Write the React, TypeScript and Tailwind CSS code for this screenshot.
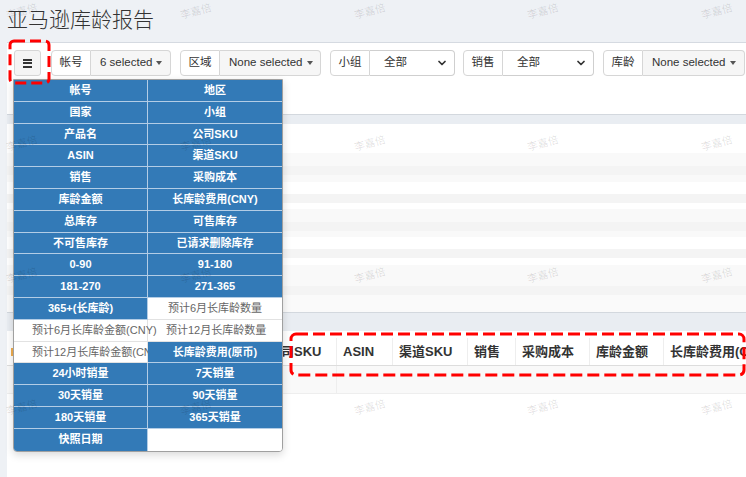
import { ChevronDown } from "lucide-react";

type Col = { label: string; on: boolean };

const columns: Col[] = [
    { label: "帐号", on: true },
    { label: "地区", on: true },
    { label: "国家", on: true },
    { label: "小组", on: true },
    { label: "产品名", on: true },
    { label: "公司SKU", on: true },
    { label: "ASIN", on: true },
    { label: "渠道SKU", on: true },
    { label: "销售", on: true },
    { label: "采购成本", on: true },
    { label: "库龄金额", on: true },
    { label: "长库龄费用(CNY)", on: true },
    { label: "总库存", on: true },
    { label: "可售库存", on: true },
    { label: "不可售库存", on: true },
    { label: "已请求删除库存", on: true },
    { label: "0-90", on: true },
    { label: "91-180", on: true },
    { label: "181-270", on: true },
    { label: "271-365", on: true },
    { label: "365+(长库龄)", on: true },
    { label: "预计6月长库龄数量", on: false },
    { label: "预计6月长库龄金额(CNY)", on: false },
    { label: "预计12月长库龄数量", on: false },
    { label: "预计12月长库龄金额(CNY)", on: false },
    { label: "长库龄费用(原币)", on: true },
    { label: "24小时销量", on: true },
    { label: "7天销量", on: true },
    { label: "30天销量", on: true },
    { label: "90天销量", on: true },
    { label: "180天销量", on: true },
    { label: "365天销量", on: true },
    { label: "快照日期", on: true },
];

// faint striped rows of the first (empty) table
const stripes = [
    { h: 29, c: "bg-white" },
    { h: 13, c: "bg-[#f9f9f9]" },
    { h: 9, c: "bg-[#f4f4f4]" },
    { h: 7, c: "bg-[#f9f9f9]" },
    { h: 12, c: "bg-white" },
    { h: 9, c: "bg-[#f4f4f4]" },
    { h: 6, c: "bg-white" },
    { h: 13, c: "bg-[#f9f9f9]" },
    { h: 9, c: "bg-[#f4f4f4]" },
    { h: 6, c: "bg-[#f9f9f9]" },
    { h: 12, c: "bg-white" },
    { h: 9, c: "bg-[#f4f4f4]" },
    { h: 7, c: "bg-white" },
    { h: 21, c: "bg-[#f9f9f9]" },
    { h: 9, c: "bg-[#f4f4f4]" },
    { h: 17, c: "bg-[#fafafa]" },
];

// header cells; the first ones sit under the column menu
const headCols = [
    { t: "", w: 60 },
    { t: "", w: 50 },
    { t: "", w: 50 },
    { t: "", w: 50 },
    { t: "", w: 45 },
    { t: "公司SKU", w: 75 },
    { t: "ASIN", w: 56 },
    { t: "渠道SKU", w: 75 },
    { t: "销售", w: 48 },
    { t: "采购成本", w: 74 },
    { t: "库龄金额", w: 74 },
    { t: "长库龄费用(CNY)", w: 120 },
];

const markX = [6, 180, 354, 527, 701];
const markY = [3, 135, 267, 399];

function Caret() {
    return (
        <span className="ml-[4px] inline-block w-0 h-0 border-l-[3.5px] border-r-[3.5px] border-t-[4px] border-l-transparent border-r-transparent border-t-[#555] align-middle" />
    );
}

function Label({ text }: { text: string }) {
    return (
        <div className="w-[40px] h-full flex items-center justify-center bg-white border border-[#d6d6d6] rounded-l-[4px] text-[#333]">
            {text}
        </div>
    );
}

function MultiButton({ text, w }: { text: string; w: string }) {
    return (
        <div
            className={`${w} h-full flex items-center pl-[9px] bg-[#f6f6f6] border border-l-0 border-[#d6d6d6] rounded-r-[4px] text-[#333] whitespace-nowrap`}
        >
            {text}
            <Caret />
        </div>
    );
}

function FakeSelect({ w }: { w: string }) {
    return (
        <div
            className={`${w} h-full flex items-center justify-between pl-[14px] pr-[6px] bg-white border border-l-0 border-[#cfcfcf] rounded-r-[4px] text-[#333]`}
        >
            <span>全部</span>
            <ChevronDown size={12} strokeWidth={3.5} className="text-[#333]" />
        </div>
    );
}

export default function App() {
    return (
        <div className="relative w-[746px] h-[477px] overflow-hidden bg-[#eef1f5] flex flex-col font-['Liberation_Sans','Noto_Sans_CJK_SC',sans-serif] text-[11.5px]">
            <div className="h-[42px] shrink-0 px-[7px] pt-[4px]">
                <h1 className="text-[21px] leading-[28px] text-[#333] font-['Noto_Sans_CJK_SC',sans-serif] font-light">
                    亚马逊库龄报告
                </h1>
            </div>

            <div className="flex-1 ml-[7px] bg-white border-t border-[#d5dae1] flex flex-col">
                {/* toolbar */}
                <div className="h-[71px] shrink-0 pt-[7px] pl-[7px]">
                    <div className="h-[26px] flex items-stretch">
                        <div className="w-[27px] h-full flex flex-col items-center justify-center gap-[1.5px] bg-[#f4f4f4] border border-[#d6d6d6] rounded-[3px]">
                            <span className="block w-[9px] h-[2px] bg-[#333]" />
                            <span className="block w-[9px] h-[2px] bg-[#333]" />
                            <span className="block w-[9px] h-[2px] bg-[#333]" />
                        </div>
                        <div className="ml-[10px] flex">
                            <Label text="帐号" />
                            <MultiButton text="6 selected" w="w-[80px]" />
                        </div>
                        <div className="ml-[9px] flex">
                            <Label text="区域" />
                            <MultiButton text="None selected" w="w-[101px]" />
                        </div>
                        <div className="ml-[9px] flex">
                            <Label text="小组" />
                            <FakeSelect w="w-[85px]" />
                        </div>
                        <div className="ml-[8px] flex">
                            <Label text="销售" />
                            <FakeSelect w="w-[91px]" />
                        </div>
                        <div className="ml-[9px] flex">
                            <Label text="库龄" />
                            <MultiButton text="None selected" w="w-[102px]" />
                        </div>
                    </div>
                </div>

                <div className="h-[10px] shrink-0 bg-[#e9edf2] border-t border-[#d3d8de]" />

                <div className="flex flex-col shrink-0">
                    {stripes.map((s, i) => (
                        <div key={i} className={s.c} style={{ height: s.h }} />
                    ))}
                </div>

                <div className="h-[19px] shrink-0 bg-[#e9edf2] border-t border-[#d3d8de]" />

                {/* second table */}
                <div className="flex-1 pt-[7px] overflow-hidden">
                    <div className="flex h-[28px] border-b border-[#dddddd] whitespace-nowrap">
                        {headCols.map((c, i) => (
                            <div
                                key={i}
                                className="shrink-0 h-full flex items-center px-[6px] border-r border-[#eeeeee] font-bold text-[13px] text-[#333]"
                                style={{ width: c.w }}
                            >
                                {i === 0 && (
                                    <span className="block w-[2px] h-[8px] bg-[#f0ad4e] -ml-[2px]" />
                                )}
                                {c.t}
                            </div>
                        ))}
                    </div>
                    <div className="flex h-[28px] bg-[#f9f9f9] border-b border-[#eeeeee]">
                        <div className="w-[330px] h-full border-r border-[#eeeeee]" />
                    </div>
                </div>
            </div>

            {/* column chooser menu */}
            <div className="absolute left-[13px] top-[79px] w-[270px] bg-white border border-[#a0a0a0] rounded-b-[4px] shadow-[0_3px_8px_rgba(0,0,0,0.15)] overflow-hidden">
                <div className="grid grid-cols-2">
                    {columns.map((c, i) => {
                        const left = i % 2 === 0;
                        const lastRow = i >= 32;
                        return (
                            <div
                                key={c.label}
                                className={`h-[21.8px] leading-[21px] px-[18px] text-center whitespace-nowrap text-[11px] ${
                                    c.on
                                        ? "bg-[#337ab7] text-white font-bold border-[#b3cde6]"
                                        : "bg-transparent text-[#666] border-[#e2e2e2]"
                                } ${left ? "border-r" : ""} ${lastRow ? "" : "border-b"}`}
                            >
                                {c.label}
                            </div>
                        );
                    })}
                    <div className="h-[21.8px] bg-white" />
                </div>
            </div>

            {/* red annotation boxes */}
            <svg className="absolute left-[8px] top-[39px]" width="43" height="46">
                <rect x="2" y="2" width="39" height="42" rx="4" fill="none" stroke="#ff0000" strokeWidth="3" strokeDasharray="11 5" />
            </svg>
            <svg className="absolute left-[289px] top-[332px]" width="457" height="45">
                <rect x="2" y="2" width="453" height="41" rx="5" fill="none" stroke="#ff0000" strokeWidth="3" strokeDasharray="12 5" />
            </svg>

            {/* watermark */}
            <div className="absolute inset-0 pointer-events-none">
                {markY.map((y) =>
                    markX.map((x) => (
                        <span
                            key={`${x}-${y}`}
                            className="absolute text-[10.5px] text-black/[0.13] -rotate-15 font-['Noto_Sans_CJK_SC',sans-serif]"
                            style={{ left: x, top: y }}
                        >
                            李嘉倍
                        </span>
                    ))
                )}
            </div>
        </div>
    );
}
